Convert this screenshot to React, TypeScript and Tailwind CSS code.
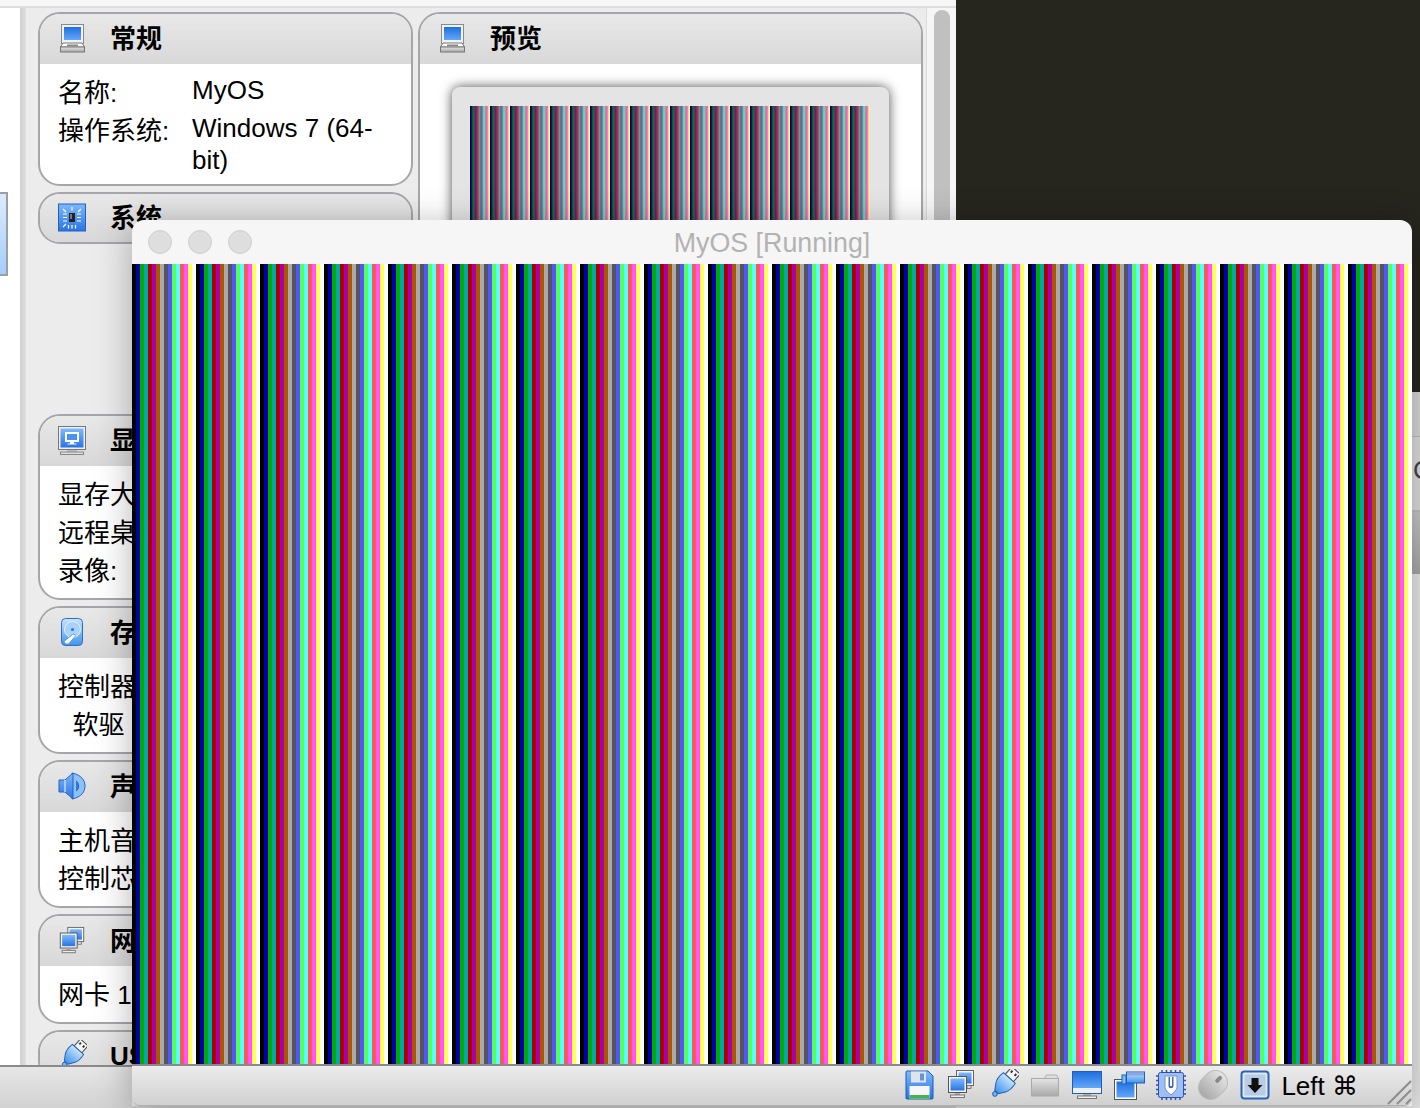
import React from "react";

const FONT = "[font-family:'Liberation_Sans','Noto_Sans_CJK_SC',sans-serif]";

// Blue and grey fills shared by all the icons
const SharedDefs = () => (
  <svg width="0" height="0" className="absolute">
    <defs>
      <linearGradient id="blue" x1="0" y1="0" x2="0" y2="1">
        <stop offset="0" stopColor="#7db9fb" />
        <stop offset="1" stopColor="#2a74e4" />
      </linearGradient>
      <linearGradient id="skyblue" x1="0" y1="0" x2="0" y2="1">
        <stop offset="0" stopColor="#c9e4fd" />
        <stop offset="1" stopColor="#3f94ea" />
      </linearGradient>
      <linearGradient id="screen" x1="0" y1="0" x2="0" y2="1">
        <stop offset="0" stopColor="#1f6fe0" />
        <stop offset="1" stopColor="#62a8f8" />
      </linearGradient>
      <linearGradient id="grey" x1="0" y1="0" x2="0" y2="1">
        <stop offset="0" stopColor="#e4e4e4" />
        <stop offset="1" stopColor="#a8a8a8" />
      </linearGradient>
    </defs>
  </svg>
);

const GeneralIcon = () => (
  <svg width="30" height="30" viewBox="0 0 30 30">
    <rect x="4.5" y="0.5" width="22" height="19" fill="#f2f2f2" stroke="#8a8a8a" />
    <rect x="7" y="3" width="17" height="13" fill="url(#screen)" />
    <path d="M6 19h19l2.5 4H3.500z" fill="#fff" stroke="#777" />
    <rect x="3.500" y="23" width="24" height="5" fill="url(#grey)" stroke="#777" />
    <rect x="10" y="20.500" width="11" height="1.500" fill="#888" />
  </svg>
);

const SystemIcon = () => (
  <svg width="30" height="30" viewBox="0 0 30 30">
    <rect x="1.500" y="1" width="27" height="27" fill="url(#blue)" stroke="#2460c0" />
    <rect x="12" y="10" width="6" height="9" fill="#222" />
    <rect x="13" y="11" width="2" height="5" fill="#777" />
    <path d="M6 11h4M6 14.500h4M6 18h4M20 11h4M20 14.500h4M20 18h4M15 4v3.500M15 22v3.500M11.500 22v3.500M18.500 22v3.500M6 6l3 3M24 6l-3 3M6 24l3-3" stroke="#fff" strokeWidth="1.200" />
  </svg>
);

const DisplayIcon = () => (
  <svg width="30" height="30" viewBox="0 0 30 30">
    <rect x="1.500" y="0.500" width="27" height="23" fill="#f0f0f0" stroke="#777" />
    <rect x="3.500" y="2.500" width="23" height="19" fill="url(#blue)" />
    <rect x="8" y="6" width="14" height="10" fill="#fff" />
    <rect x="10" y="8" width="10" height="6" fill="#4b92ee" />
    <path d="M13 16h4v1.500h-4zM10.500 17.500h9v1h-9z" fill="#fff" />
    <path d="M10 24h10v2H10z" fill="#bbb" />
    <rect x="3.500" y="26" width="23" height="2.500" fill="#ddd" stroke="#888" />
  </svg>
);

const StorageIcon = () => (
  <svg width="30" height="30" viewBox="0 0 30 30">
    <rect x="4.500" y="0.500" width="21" height="27" rx="4" fill="url(#skyblue)" stroke="#2a70cc" />
    <circle cx="15.500" cy="11.500" r="8" fill="#a9d2f8" stroke="#e6f3ff" />
    <circle cx="15.500" cy="11.500" r="1.500" fill="#2f76d0" />
    <path d="M7.500 23l8-6.500c1.500-1 3.500.5 2.500 2l-6 7c-2 1.500-5.500-.5-4.500-2.500z" fill="#fff" stroke="#5a9ae0" />
  </svg>
);

const AudioIcon = () => (
  <svg width="30" height="30" viewBox="0 0 30 30">
    <path d="M15 1c10 2 13 8 13 13s-3 11-13 13z" fill="#8cc2f8" stroke="#2460c0" />
    <path d="M2 8h6l8-7v26l-8-7H2z" fill="url(#blue)" stroke="#2460c0" />
    <path d="M8 8v12" stroke="#bcdcff" strokeWidth="1.500" />
    <path d="M19 9c3.500 2 3.500 8 0 10" fill="#2f7ae6" stroke="#2460c0" />
  </svg>
);

const NetworkIcon = () => (
  <svg width="32" height="32" viewBox="0 0 32 32">
    <rect x="11.500" y="1.500" width="17" height="15" fill="#f4f4f4" stroke="#666" />
    <rect x="13.500" y="3.500" width="13" height="11" fill="url(#blue)" />
    <path d="M22 16.500h4v3h-4z" fill="#ddd" stroke="#777" />
    <rect x="3.500" y="7.500" width="18" height="16" fill="#f4f4f4" stroke="#555" />
    <rect x="5.500" y="9.500" width="14" height="12" fill="url(#blue)" />
    <rect x="10" y="24" width="5" height="2" fill="#aaa" />
    <rect x="5.500" y="26" width="14" height="2.500" fill="#eee" stroke="#777" />
  </svg>
);

const UsbIcon = () => (
  <svg width="32" height="32" viewBox="0 0 32 32">
    <g transform="rotate(42 16 16)">
      <rect x="10.500" y="-3.500" width="11" height="10" fill="#f4f4f4" stroke="#444" />
      <rect x="12.500" y="-1" width="2" height="2.500" fill="#333" />
      <rect x="17.500" y="-1" width="2" height="2.500" fill="#333" />
      <path d="M8 6.500h16c1 5.500 .5 10-1.500 13l-4 6h-5l-4-6c-2-3-2.500-7.500-1.500-13z" fill="url(#skyblue)" stroke="#2060b8" />
      <circle cx="16" cy="28" r="2.200" fill="#7db9fb" stroke="#2060b8" />
    </g>
  </svg>
);

const FolderIcon = () => (
  <svg width="32" height="32" viewBox="0 0 32 32">
    <path d="M3.500 9.500h12l2-3.500h10l2 3.500v17h-26z" fill="#dedede" stroke="#b0b0b0" />
    <rect x="2.500" y="9.500" width="27" height="17.500" fill="url(#grey)" stroke="#aaa" />
  </svg>
);

const FloppyIcon = () => (
  <svg width="32" height="32" viewBox="0 0 32 32">
    <path d="M4 2h21l5 5v22a1 1 0 0 1-1 1H4a1 1 0 0 1-1-1V3a1 1 0 0 1 1-1z" fill="url(#blue)" stroke="#1a5ab8" />
    <rect x="8" y="2.500" width="15" height="11" fill="#dfe4ea" />
    <rect x="17" y="4.500" width="4" height="7" fill="#5f97dc" />
    <rect x="6.500" y="17" width="20" height="12.500" fill="#f6f6f6" />
    <rect x="6.500" y="26" width="20" height="3.500" fill="#4caf50" />
  </svg>
);

const ScreenIcon = () => (
  <svg width="32" height="32" viewBox="0 0 32 32">
    <rect x="1.500" y="2.500" width="29" height="22" fill="#eee" stroke="#1f5fb4" />
    <rect x="2" y="3" width="28" height="16" fill="url(#screen)" />
    <rect x="12" y="25" width="8" height="2" fill="#aaa" />
    <rect x="6.500" y="27" width="19" height="2.500" fill="#eee" stroke="#777" />
  </svg>
);

const SeamlessIcon = () => (
  <svg width="32" height="32" viewBox="0 0 32 32">
    <rect x="1.500" y="10.500" width="22" height="20" fill="#fff" stroke="#555" />
    <rect x="3.500" y="12.500" width="18" height="16" fill="url(#screen)" />
    <rect x="9" y="6" width="4" height="9" fill="#7db9fb" stroke="#2060b8" />
    <rect x="13.500" y="3" width="18" height="11" fill="url(#skyblue)" stroke="#2060b8" />
    <rect x="14" y="3.500" width="17" height="3" fill="#8aa6e4" />
  </svg>
);

const ChipIcon = () => (
  <svg width="32" height="32" viewBox="0 0 32 32">
    <path d="M7 1v30M11.500 1v30M16 1v30M20.500 1v30M25 1v30M1 7h30M1 11.500h30M1 16h30M1 20.500h30M1 25h30" stroke="#2f50b0" strokeWidth="1.500" />
    <rect x="3.500" y="3.500" width="25" height="25" rx="2" fill="#9cc0f4" stroke="#2f50b0" />
    <path d="M10 7h12v11c0 3-3 5-6 8-3-3-6-5-6-8z" fill="#fff" stroke="#7a90c8" />
    <path d="M13.500 8v9c0 3 5 3 5 0V8h-1.500v9h-2V8z" fill="#3f66c0" />
  </svg>
);

const MouseIcon = () => (
  <svg width="32" height="32" viewBox="0 0 32 32">
    <g transform="rotate(45 16 16)">
      <rect x="4" y="0.500" width="24" height="31" rx="12" fill="url(#grey)" stroke="#bcbcbc" />
      <rect x="14" y="4" width="4" height="8" rx="2" fill="#8a8a8a" />
    </g>
  </svg>
);

const ArrowBoxIcon = () => (
  <svg width="32" height="32" viewBox="0 0 32 32">
    <rect x="2.500" y="2.500" width="27" height="27" rx="3" fill="#dfe9f6" stroke="#2a64b8" strokeWidth="2" />
    <rect x="5.500" y="5.500" width="21" height="21" fill="#b9cce6" />
    <path d="M12.500 9h7v7h4L16 24l-7.500-8h4z" fill="#111" />
  </svg>
);

const ResizeGrip = () => (
  <svg width="26" height="26" viewBox="0 0 26 26" className="absolute right-0 bottom-0">
    <path d="M2 25L25 2M11 25L25 11M20 25l5-5" stroke="#8c8c8c" strokeWidth="2" />
  </svg>
);

type PanelProps = {
  title: string;
  icon: React.ReactNode;
  rows?: [string, string?][];
};

// Grey header with rounded frame, as in the VirtualBox details pane
const Panel = ({ title, icon, rows }: PanelProps) => (
  <div className="shrink-0 overflow-hidden rounded-[22px] border-2 border-[#a6a6aa] bg-white">
    <div
      className={`flex items-center gap-[23px] bg-gradient-to-b from-[#e8e8e8] to-[#d8d8d8] pl-[17px] ${
        rows ? "h-[50px]" : "h-12"
      }`}
    >
      <span className="flex w-[30px] justify-center">{icon}</span>
      <span className="text-[26px] font-bold text-black">{title}</span>
    </div>
    {rows && (
      <div className="pt-[10px] pb-2 pl-[18px] text-[26px] text-black">
        {rows.map(([label, value]) => (
          <div key={label} className="flex py-[3px] leading-[32px]">
            <span className="w-[134px] shrink-0 whitespace-pre">{label}</span>
            {value && <span className="-mt-[3px] -mb-[3px] w-[200px]">{value}</span>}
          </div>
        ))}
      </div>
    )}
  </div>
);

const App = () => {
  return (
    <div className={`relative flex h-[1108px] w-[1420px] overflow-hidden bg-[#e4e4e4] ${FONT}`}>
      <SharedDefs />

      {/* Ventana de detalles detrás */}
      <div className="flex h-full w-[956px] flex-col bg-[#ececec]">
        <div className="h-2 shrink-0 border-b-2 border-[#dddddd] bg-[#f6f6f6]" />
        <div className="flex min-h-0 flex-1 overflow-hidden">
          <div className="w-5 shrink-0 bg-white pt-[184px]">
            <div className="h-[84px] w-2 border-y-2 border-r-2 border-[#9a9ea6] bg-gradient-to-b from-[#dcebfe] to-[#a6ccfa]" />
          </div>
          <div className="w-1.5 shrink-0 bg-gradient-to-r from-[#d0d0d0] to-[#dedede]" />
          <div className="flex w-[900px] shrink-0 gap-[5px] pt-1 pl-3">
            <div className="flex w-[375px] shrink-0 flex-col gap-1.5">
              <Panel
                title="常规"
                icon={<GeneralIcon />}
                rows={[
                  ["名称:", "MyOS"],
                  ["操作系统:", "Windows 7 (64-bit)"],
                ]}
              />
              <Panel title="系统" icon={<SystemIcon />} />
              <div className="h-[158px] shrink-0" />
              <Panel title="显示" icon={<DisplayIcon />} rows={[["显存大小:"], ["远程桌面:"], ["录像:"]]} />
              <Panel title="存储" icon={<StorageIcon />} rows={[["控制器:"], ["  软驱"]]} />
              <Panel title="声音" icon={<AudioIcon />} rows={[["主机音频:"], ["控制芯片:"]]} />
              <Panel title="网络" icon={<NetworkIcon />} rows={[["网卡 1:"]]} />
              <Panel title="USB" icon={<UsbIcon />} />
            </div>
            <div className="h-[520px] w-[505px] shrink-0 overflow-hidden rounded-[22px] border-2 border-[#a6a6aa] bg-white">
              <div className="flex h-[50px] items-center gap-[23px] bg-gradient-to-b from-[#e8e8e8] to-[#d8d8d8] pl-[17px]">
                <span className="flex w-[30px] justify-center">
                  <GeneralIcon />
                </span>
                <span className="text-[26px] font-bold text-black">预览</span>
              </div>
              <div className="pt-[23px] pl-8">
                <div className="h-[288px] w-[437px] rounded-t-lg bg-[#e4e4e4] pt-[19px] pl-[18px] shadow-[0_0_12px_rgba(0,0,0,0.7)]">
                  <div className="h-[250px] w-[400px] bg-[repeating-linear-gradient(90deg,#000030_0,#0a1060_1.33px,#0a6030_2.67px,#0a7070_4px,#8a1040_5.33px,#902080_6.67px,#905030_8px,#908a8a_9.33px,#607080_10.67px,#6060d0_12px,#60d090_13.33px,#60d8d0_14.67px,#f06080_16px,#f070d0_17.33px,#f8e080_18.67px,#fff8d8_20px)]" />
                </div>
              </div>
            </div>
          </div>
          <div className="flex w-[30px] shrink-0 justify-center border-l border-[#dcdcdc] bg-[#f6f6f6] pt-0.5">
            <div className="h-[600px] w-4 rounded-full bg-[#c0c0c0]" />
          </div>
        </div>
        <div className="h-[43px] shrink-0 border-t-2 border-[#8a8a8a] bg-gradient-to-b from-[#e6e6e6] to-[#d2d2d2]" />
      </div>

      {/* Lo que se ve a la derecha */}
      <div className="flex h-full w-[464px] flex-col">
        <div className="h-[392px] shrink-0 bg-[#26261f]" />
        <div className="h-[45px] shrink-0 border-b border-[#bdbdbd] bg-[#d8d8d8]" />
        <div className="flex h-[75px] shrink-0 items-center border-b-2 border-[#c0c0c0] bg-[#dedede] pb-1.5 pl-[457px] text-[26px] text-[#444444]">
          C
        </div>
        <div className="h-[62px] shrink-0 bg-gradient-to-b from-[#c8c8c8] to-[#a8a8a8]" />
        <div className="flex-1 bg-[#e8e8e8]" />
      </div>

      {/* Ventana de la máquina virtual */}
      <div className="absolute top-[220px] left-[132px] flex w-[1280px] flex-col shadow-[0_6px_34px_rgba(0,0,0,0.3)]">
        <div className="grid h-11 grid-cols-[1fr_auto_1fr] items-center rounded-t-xl bg-[#f6f6f6]">
          <div className="flex gap-4 pl-4">
            <span className="h-6 w-6 rounded-full border border-[#d0d0d0] bg-[#dedede]" />
            <span className="h-6 w-6 rounded-full border border-[#d0d0d0] bg-[#dedede]" />
            <span className="h-6 w-6 rounded-full border border-[#d0d0d0] bg-[#dedede]" />
          </div>
          <span className="pt-[3px] text-[26.8px] text-[#b2b2b2]">MyOS [Running]</span>
          <span />
        </div>
        <div className="h-[800px] bg-[repeating-linear-gradient(90deg,#000000_0_4px,#0000aa_4px_8px,#00aa00_8px_12px,#00aaaa_12px_16px,#aa0000_16px_20px,#aa00aa_20px_24px,#aa5500_24px_28px,#aaaaaa_28px_32px,#555555_32px_36px,#5555ff_36px_40px,#55ff55_40px_44px,#55ffff_44px_48px,#ff5555_48px_52px,#ff55ff_52px_56px,#ffff55_56px_60px,#ffffff_60px_64px)]" />
        <div className="relative flex h-[42px] items-center justify-end gap-2.5 rounded-b-lg border-t-2 border-b border-[#8a8a8a] border-b-[#b0b0b0] bg-gradient-to-b from-[#ececec] to-[#d0d0d0] pr-[54px] pb-0.5">
          <FloppyIcon />
          <NetworkIcon />
          <UsbIcon />
          <FolderIcon />
          <ScreenIcon />
          <SeamlessIcon />
          <ChipIcon />
          <MouseIcon />
          <ArrowBoxIcon />
          <span className="mt-1 whitespace-nowrap text-[26px] text-black">
            Left <span className="[font-family:'DejaVu_Sans',sans-serif]">⌘</span>
          </span>
          <ResizeGrip />
        </div>
      </div>
    </div>
  );
};

export default App;
